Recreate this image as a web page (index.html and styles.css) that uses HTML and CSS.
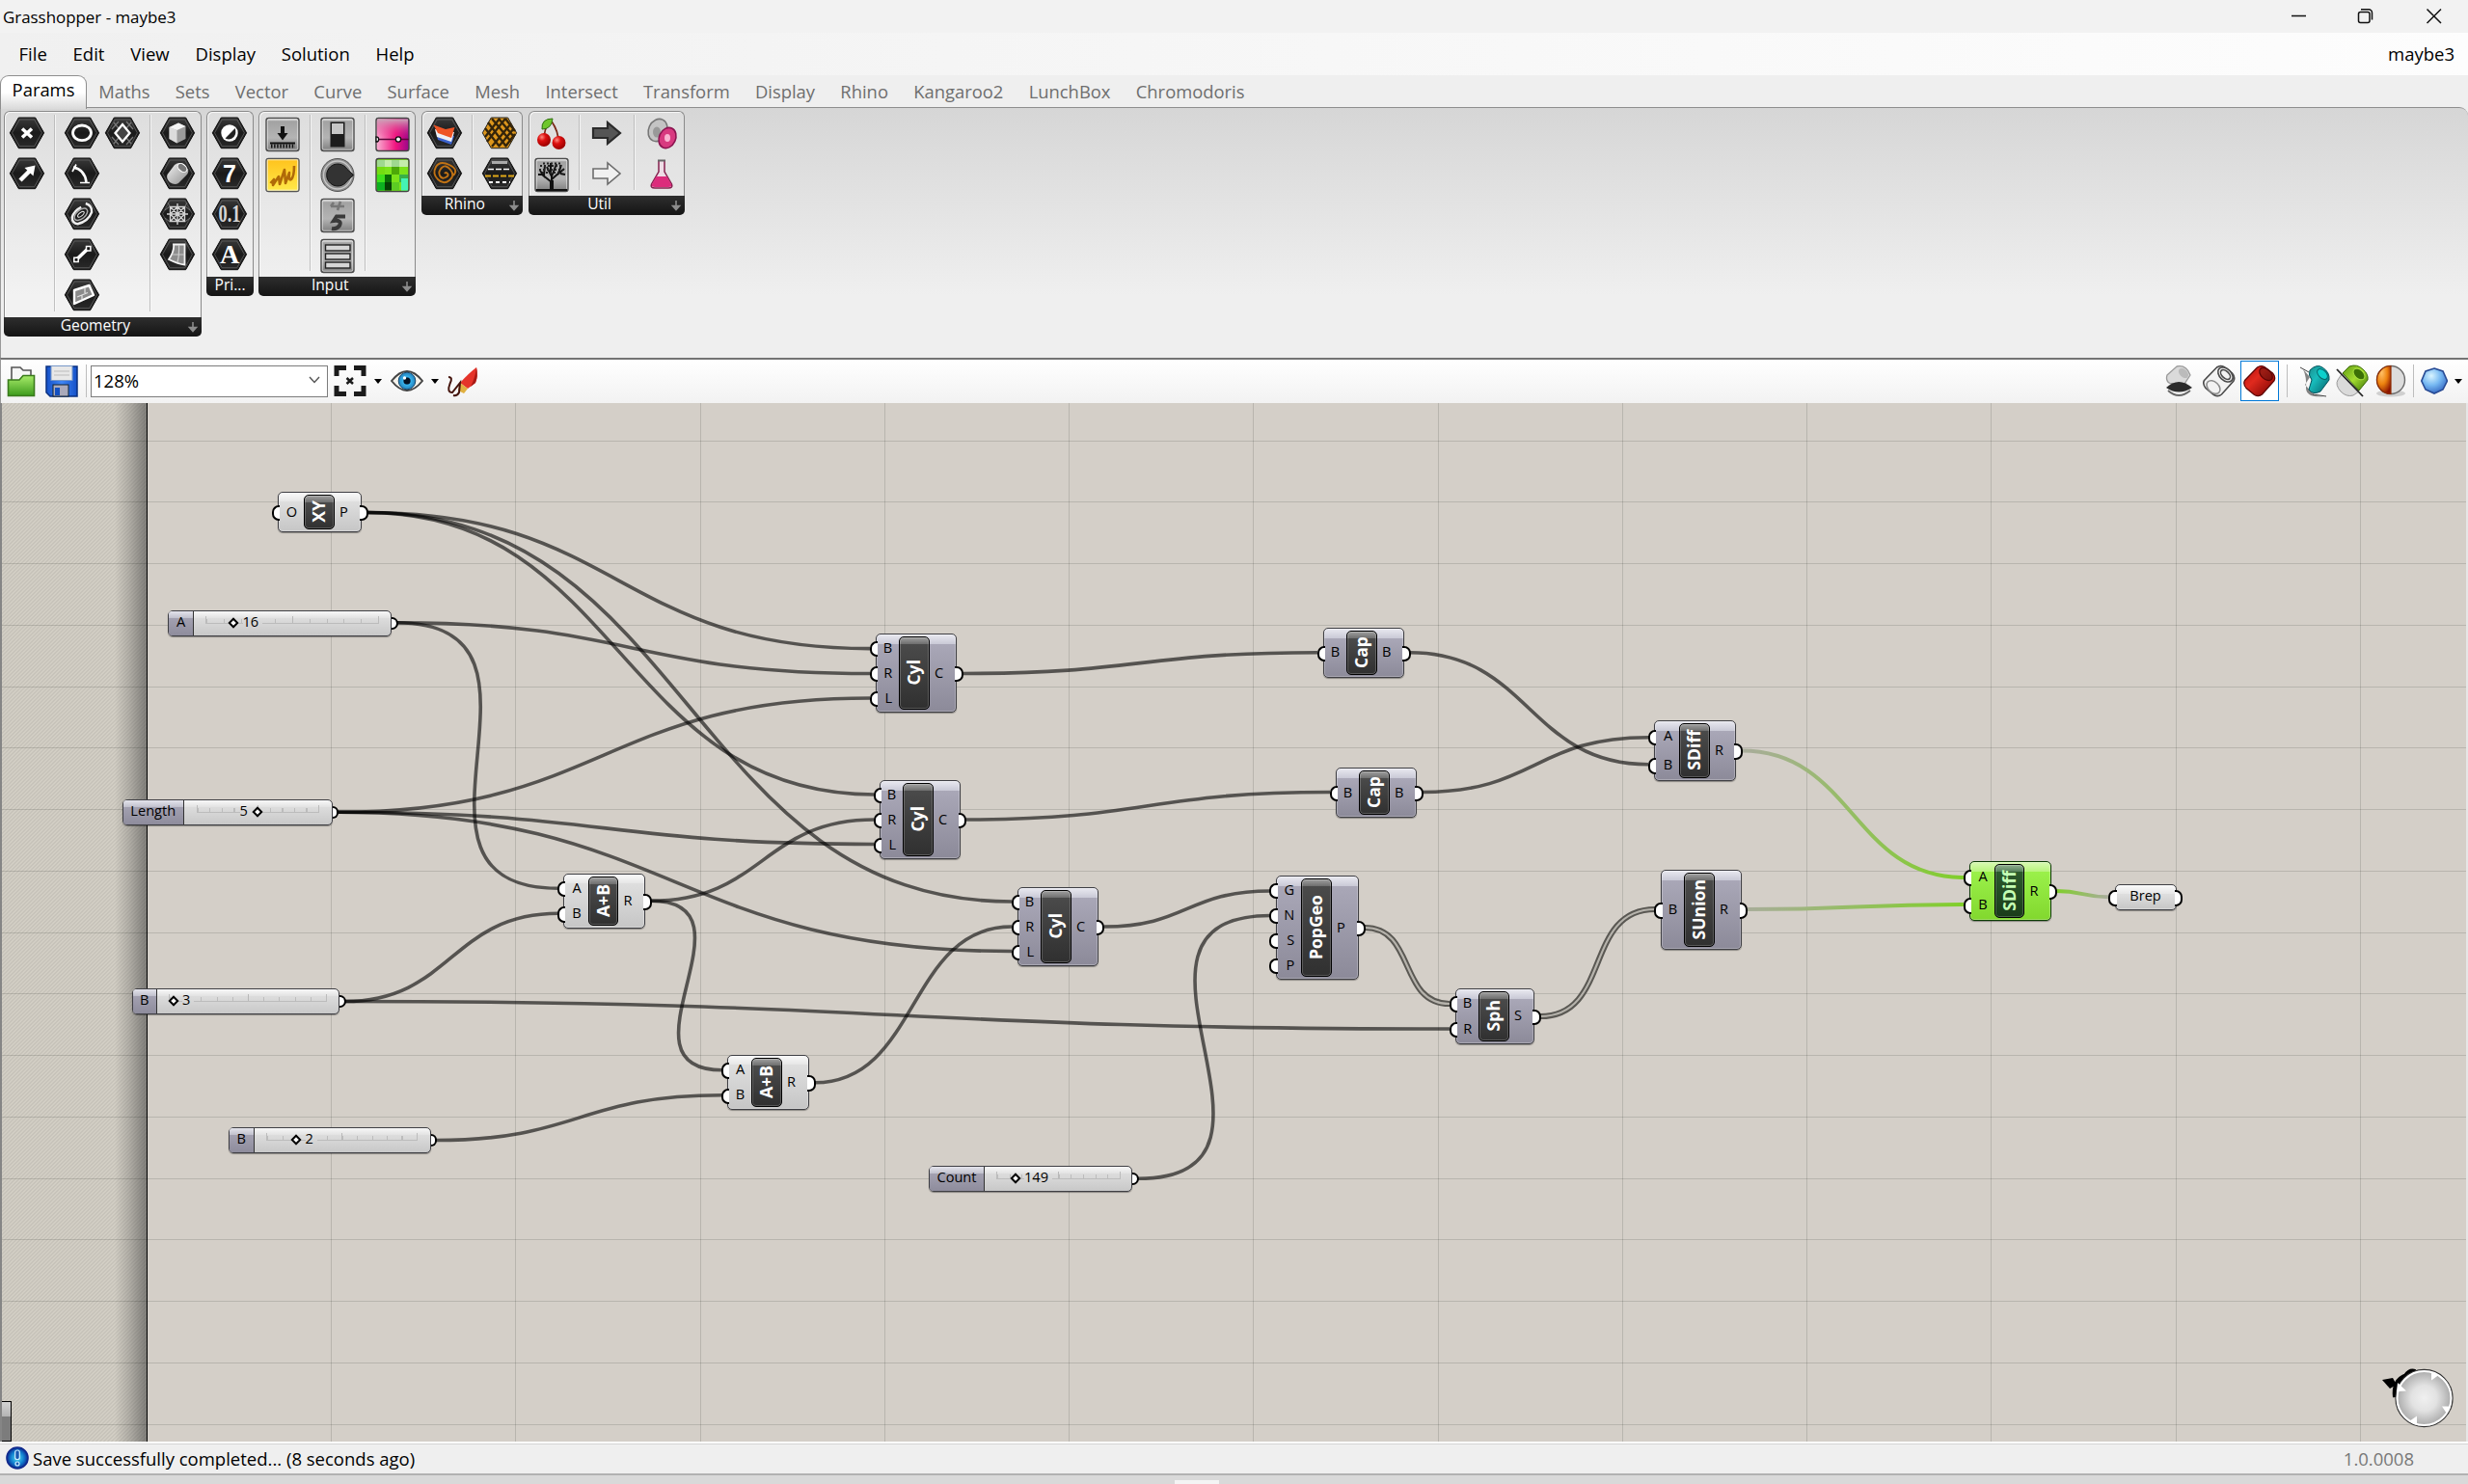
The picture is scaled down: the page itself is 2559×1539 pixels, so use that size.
FILE: index.html
```html
<!DOCTYPE html>
<html lang="en">
<head>
<meta charset="utf-8">
<title>Grasshopper - maybe3</title>
<link rel="stylesheet" href="styles.css">
</head>
<body>
<svg class="defs" width="0" height="0" aria-hidden="true">
  <defs>
    <linearGradient id="hexFill" x1="0" y1="0" x2="0" y2="1"><stop offset="0" stop-color="#3a3a3a"/><stop offset=".5" stop-color="#1a1a1a"/><stop offset="1" stop-color="#2a2a2a"/></linearGradient>
    <linearGradient id="btnFill" x1="0" y1="0" x2="0" y2="1"><stop offset="0" stop-color="#f0f0f0"/><stop offset=".1" stop-color="#a2a2a2"/><stop offset=".6" stop-color="#b4b4b4"/><stop offset="1" stop-color="#7d7d7d"/></linearGradient>
    <linearGradient id="solid" x1="0" y1="0" x2="1" y2="1"><stop offset="0" stop-color="#f4f4f4"/><stop offset="1" stop-color="#8c8c8c"/></linearGradient>
    <linearGradient id="pink" x1="0" y1="0" x2="1" y2="0"><stop offset="0" stop-color="#f9b5d5"/><stop offset=".6" stop-color="#f0147f"/><stop offset="1" stop-color="#98078b"/></linearGradient>
    <linearGradient id="pinkTop" x1="0" y1="0" x2="0" y2="1"><stop offset="0" stop-color="#c9a5b8"/><stop offset="1" stop-color="#f0147f" stop-opacity="0"/></linearGradient>
    <linearGradient id="yellow" x1="0" y1="0" x2="0" y2="1"><stop offset="0" stop-color="#ffc21c"/><stop offset="1" stop-color="#ffe94a"/></linearGradient>
    <linearGradient id="green" x1="0" y1="0" x2="0" y2="1"><stop offset="0" stop-color="#a8ec6a"/><stop offset="1" stop-color="#3c9a1c"/></linearGradient>
    <linearGradient id="blue" x1="0" y1="0" x2="1" y2="0"><stop offset="0" stop-color="#1450c8"/><stop offset=".5" stop-color="#3f86f4"/><stop offset="1" stop-color="#1450c8"/></linearGradient>
    <linearGradient id="red" x1="0" y1="0" x2="1" y2="1"><stop offset="0" stop-color="#b40c0c"/><stop offset=".4" stop-color="#e02a1e"/><stop offset="1" stop-color="#740000"/></linearGradient>
    <linearGradient id="teal" x1="0" y1="0" x2="1" y2="1"><stop offset="0" stop-color="#1d8d8d"/><stop offset=".4" stop-color="#18bcbc"/><stop offset="1" stop-color="#046068"/></linearGradient>
    <linearGradient id="lime" x1="0" y1="0" x2="1" y2="1"><stop offset="0" stop-color="#5f9a14"/><stop offset=".5" stop-color="#a4dc30"/><stop offset="1" stop-color="#3c7404"/></linearGradient>
    <radialGradient id="orange" cx=".35" cy=".25" r=".8"><stop offset="0" stop-color="#ffc066"/><stop offset=".5" stop-color="#ee8410"/><stop offset="1" stop-color="#8c1400"/></radialGradient>
    <radialGradient id="sky" cx=".38" cy=".3" r=".75"><stop offset="0" stop-color="#d8f4ff"/><stop offset=".5" stop-color="#76b8f2"/><stop offset="1" stop-color="#3264c0"/></radialGradient>
    <radialGradient id="iris"><stop offset=".2" stop-color="#0a3c78"/><stop offset=".5" stop-color="#36b0e8"/><stop offset="1" stop-color="#2480bc"/></radialGradient>
    <radialGradient id="cherry" cx=".35" cy=".3" r=".7"><stop offset="0" stop-color="#ff8a80"/><stop offset=".4" stop-color="#dd1010"/><stop offset="1" stop-color="#9c0000"/></radialGradient>
    <radialGradient id="info"><stop offset="0" stop-color="#54e0f0"/><stop offset=".6" stop-color="#1280d0"/><stop offset="1" stop-color="#0a2a90"/></radialGradient>
    <radialGradient id="dial"><stop offset="0" stop-color="#f0f0f0"/><stop offset=".45" stop-color="#e2e2e2"/><stop offset="1" stop-color="#a6a6a6"/></radialGradient>
    <g id="hex">
      <path d="M12.3 5H29.6L38.6 20.8L29.6 36.7H12.3L3.3 20.8Z" fill="url(#hexFill)" stroke="#0c0c0c"/>
      <path d="M13.2 7H28.7L36.4 20.8L28.7 34.7H13.2L5.5 20.8Z" fill="none" stroke="#686868" stroke-opacity=".7"/>
    </g>
    <g id="btn"><rect x="4" y="5.5" width="34" height="34" rx="2.5" fill="url(#btnFill)" stroke="#4c4c4c" stroke-width="1.4"/><rect x="5.3" y="6.8" width="31.4" height="31.4" rx="1.5" fill="none" stroke="#fff" stroke-opacity=".55"/></g>
    <symbol id="down" viewBox="0 0 12 14"><path d="M6 2V8M2.500 7.500H9.500L6 11.500Z" fill="#8c8c8c" stroke="#8c8c8c" stroke-width="1.600"/></symbol>
    <symbol id="tube" viewBox="0 0 34 34">
      <path d="M1.500 16.500L14.500 3Q18 .5 22 2.500L30.500 9Q34 13 32 17L19.500 31Q16 34 11.500 31.500L3 24.500Q-.5 20 1.500 16.500Z"/>
      <ellipse cx="23.500" cy="10" rx="8" ry="5" transform="rotate(43 23.5 10)" fill="#000" fill-opacity=".3" stroke-width="1.200"/>
    </symbol>
  </defs>
</svg>

<div class="window">
  <header class="titlebar">
    <span class="titlebar__text">Grasshopper - maybe3</span>
    <svg class="titlebar__controls" width="190" height="34" viewBox="0 0 190 34" fill="none" stroke="#111" stroke-width="1.500">
      <path d="M7 16.500H22"/>
      <path d="M76.500 14.500a2 2 0 0 1 2-2h7.500a2 2 0 0 1 2 2v7a2 2 0 0 1-2 2h-7.500a2 2 0 0 1-2-2zM79 9.800h8a3.500 3.500 0 0 1 3.500 3.500V20.500"/>
      <path d="M147.500 9.500L162 24M162 9.500L147.500 24"/>
    </svg>
  </header>

  <nav class="menubar">
    <span>File</span><span>Edit</span><span>View</span><span>Display</span><span>Solution</span><span>Help</span>
    <span class="menubar__doc">maybe3</span>
  </nav>

  <nav class="tabs">
    <span class="tabs__item tabs__item--active">Params</span><span class="tabs__item">Maths</span><span class="tabs__item">Sets</span><span class="tabs__item">Vector</span><span class="tabs__item">Curve</span><span class="tabs__item">Surface</span><span class="tabs__item">Mesh</span><span class="tabs__item">Intersect</span><span class="tabs__item">Transform</span><span class="tabs__item">Display</span><span class="tabs__item">Rhino</span><span class="tabs__item">Kangaroo2</span><span class="tabs__item">LunchBox</span><span class="tabs__item">Chromodoris</span>
  </nav>

  <section class="ribbon">
    <div class="panel">
      <div class="panel__body">
        <div class="col">
          <svg class="ic" viewBox="0 0 42 42"><use href="#hex"/><path d="M16 16.500L26 25.500M26 16.500L16 25.500" stroke="#fff" stroke-width="3.600"/></svg>
          <svg class="ic" viewBox="0 0 42 42"><use href="#hex"/><path d="M14 28L24 18" stroke="#fff" stroke-width="4.500"/><path d="M18.500 15L29.500 12.500L27.500 23.500Z" fill="#fff"/></svg>
        </div>
        <div class="col">
          <svg class="ic" viewBox="0 0 42 42"><use href="#hex"/><ellipse cx="21" cy="20.800" rx="9.500" ry="7.800" fill="none" stroke="#fff" stroke-width="2.800"/></svg>
          <svg class="ic" viewBox="0 0 42 42"><use href="#hex"/><path d="M12 14.500Q24 17 25.500 30" fill="none" stroke="#fff" stroke-width="2.600"/><path d="M11 19L15 11.500M19 30.500H29" stroke="#fff" stroke-width="1.600"/></svg>
          <svg class="ic" viewBox="0 0 42 42"><use href="#hex"/><g fill="none" stroke="#eee" transform="rotate(-40 21 21)"><path d="M31 15Q35 21 30 26Q21 31 11 26Q7 22 11 17Q17 13 25 15" stroke-width="2.400"/><ellipse cx="20" cy="20.500" rx="8" ry="4.500" stroke="#aaa" stroke-width="1.500"/><ellipse cx="20" cy="20.500" rx="4" ry="1.800"/></g></svg>
          <svg class="ic" viewBox="0 0 42 42"><use href="#hex"/><path d="M15 26.500L27 15" stroke="#fff" stroke-width="3.600"/><path d="M12.800 24.200h4.400v4.400h-4.400zM25.500 12.500h4.400v4.400h-4.400z" fill="#111" stroke="#fff" stroke-width="1.500"/></svg>
          <svg class="ic" viewBox="0 0 42 42"><use href="#hex"/><path d="M13 16L28.500 11L33 21L13 30Z" fill="#8a8a8a" stroke="#fff" stroke-width="2.400" stroke-linejoin="round"/><path d="M16 23L27 18.500M21 21V25.500M24 13.500V19" stroke="#ddd" stroke-width="1.300"/></svg>
        </div>
        <div class="col col--near">
          <svg class="ic" viewBox="0 0 42 42"><use href="#hex"/><path d="M12 10L30 32M30 10L12 32M10 17L17 9M25 9L32 17M10 25L17 33M25 33L32 25" stroke="#777" stroke-width="1.200"/><path d="M21 12L28.500 21L21 30L13.500 21Z" fill="#444" stroke="#fff" stroke-width="2.300"/></svg>
        </div>
        <div class="col">
          <svg class="ic" viewBox="0 0 42 42"><use href="#hex"/><path d="M12.500 15L22 10.500L29.500 14V27L20.500 31.500L12.500 27Z" fill="#9c9c9c"/><path d="M12.500 15L20.500 18V31.500L12.500 27Z" fill="#dcdcdc"/><path d="M12.500 15L22 10.500L29.500 14L20.500 18Z" fill="#f4f4f4"/></svg>
          <svg class="ic" viewBox="0 0 42 42"><use href="#hex"/><path d="M10.500 22L18 12Q22 8.500 27 11L32 16.500Q33 20 30 23L22 31Q18 33.500 13 30Q9 26 10.500 22Z" fill="url(#solid)"/><ellipse cx="26" cy="15" rx="5.500" ry="3.600" transform="rotate(40 26 15)" fill="#777" stroke="#fff"/></svg>
          <svg class="ic" viewBox="0 0 42 42"><use href="#hex"/><path d="M13.500 13.500H28.500V28.500H13.500ZM21 10V32M10 21H32M13.500 13.500L28.500 28.500M28.500 13.500L13.500 28.500M21 13.500L28.500 21L21 28.500L13.500 21Z" fill="none" stroke="#d2d2d2" stroke-width="1.400"/><path d="M8 17L13 13L11 9M34 17L29 13L31 9M8 25L13 29M34 25L29 29" stroke="#777" fill="none"/></svg>
          <svg class="ic" viewBox="0 0 42 42"><use href="#hex"/><path d="M17 10.500H28.500V31.500Q22 31 12 26Q18 17 17 10.500Z" fill="#8d8d8d" stroke="#f2f2f2" stroke-width="1.800"/><path d="M16 21H28M22.500 11Q23 22 21 29" stroke="#ccc" fill="none" stroke-width="1.200"/></svg>
        </div>
      </div>
      <div class="panel__bar"><span>Geometry</span><svg width="12" height="14"><use href="#down"/></svg></div>
    </div>

    <div class="panel">
      <div class="panel__body">
        <div class="col">
          <svg class="ic" viewBox="0 0 42 42"><use href="#hex"/><circle cx="21" cy="21" r="8.700" fill="#fff"/><path d="M26.800 16L16.500 26.500Q22 29 25.500 25Q28.500 21 26.800 16Z" fill="#222"/></svg>
          <svg class="ic" viewBox="0 0 42 42"><use href="#hex"/><text class="glyph" x="21" y="30">7</text></svg>
          <svg class="ic" viewBox="0 0 42 42"><use href="#hex"/><text class="glyph glyph--serif" x="21" y="29" textLength="23" lengthAdjust="spacingAndGlyphs">0.1</text></svg>
          <svg class="ic" viewBox="0 0 42 42"><use href="#hex"/><text class="glyph glyph--bold" x="21" y="29.500">A</text></svg>
        </div>
      </div>
      <div class="panel__bar panel__bar--short"><span>Pri...</span></div>
    </div>

    <div class="panel">
      <div class="panel__body">
        <div class="col">
          <svg class="ic" viewBox="0 0 42 42"><use href="#btn"/><path d="M19 14H23V21H26.500L21 28.500L15.500 21H19Z" fill="#111"/><path d="M8 31.500H34" stroke="#111" stroke-width="2"/><path d="M9 34.500H34" stroke="#111" stroke-width="4" stroke-dasharray="1.500 1.600"/></svg>
          <svg class="ic" viewBox="0 0 42 42"><rect x="4" y="5.500" width="34" height="34" rx="2.500" fill="url(#yellow)" stroke="#555" stroke-width="1.400"/><rect x="5.300" y="6.800" width="31.400" height="31.400" fill="none" stroke="#fff" stroke-opacity=".7"/><path d="M8.500 31L12 27L11 33L17 24L18 32L23 17L24 31L28 20Q27 29 30 27Q33 24 33 13" fill="none" stroke="#b06a08" stroke-width="2.600" stroke-linejoin="round"/></svg>
        </div>
        <div class="col">
          <svg class="ic" viewBox="0 0 42 42"><use href="#btn"/><rect x="13.500" y="9.500" width="15" height="26" fill="#1c1c1c"/><rect x="15" y="11" width="12" height="11" fill="#c6c6c6"/></svg>
          <svg class="ic" viewBox="0 0 42 42"><circle cx="21" cy="22.500" r="17" fill="#8f8f8f" stroke="#555"/><circle cx="21" cy="22.500" r="14.500" fill="none" stroke="#c8c8c8" stroke-width="1.300"/><path d="M31 16.500A11.500 11.500 0 1 0 31 28.500L37.500 22.500Z" fill="#333" stroke="#111"/></svg>
          <svg class="ic" viewBox="0 0 42 42"><use href="#btn"/><path d="M14 13H28M24 8L21 17M17 9L14 13" stroke="#777" stroke-width="2.600" fill="none"/><path d="M29 23.500H20L17 28Q26 27 23 33Q20 37 15 36" fill="none" stroke="#3a3a3a" stroke-width="4"/></svg>
          <svg class="ic" viewBox="0 0 42 42"><use href="#btn"/><g fill="#d6d6d6" stroke="#222" stroke-width="1.400"><rect x="8.500" y="11" width="25.500" height="6"/><rect x="8.500" y="20" width="25.500" height="6"/><rect x="8.500" y="29" width="25.500" height="6"/></g></svg>
        </div>
        <div class="col">
          <svg class="ic" viewBox="0 0 42 42"><rect x="4" y="5.500" width="34" height="34" rx="2.500" fill="url(#pink)" stroke="#444" stroke-width="1.400"/><rect x="5" y="6.500" width="32" height="20" fill="url(#pinkTop)"/><path d="M4 27.500H38" stroke="#5c0638" stroke-width="1.600"/><circle cx="27" cy="27.500" r="2.600" fill="#fff" stroke="#111" stroke-width="1.300"/><path d="M4 24.800a2.700 2.700 0 0 1 0 5.400z" fill="#fff" stroke="#111" stroke-width="1.300"/></svg>
          <svg class="ic" viewBox="0 0 42 42"><rect x="4" y="5.500" width="34" height="34" rx="2.500" fill="#7be21a" stroke="#444" stroke-width="1.400"/><path d="M5 7H13V14H5ZM20 7H28V14H20Z" fill="#9fd890"/><path d="M13 7H20V14H13ZM28 7H37V14H28Z" fill="#c4ecac"/><path d="M5 14H13V22H5Z" fill="#74dc12"/><path d="M20 14H28V22H20Z" fill="#4ca808"/><path d="M13 22H20V30H13Z" fill="#0a6c06"/><path d="M28 22H37V30H28Z" fill="#38b048"/><path d="M5 22H13V30H5Z" fill="#3ee01c"/><path d="M5 30H13V38.500H5Z" fill="#0cb020"/><path d="M13 30H20V38.500H13Z" fill="#064004"/><path d="M20 30H28V38.500H20Z" fill="#5ccc24"/><path d="M30 26H37V38.500H30Z" fill="#44f4b4"/></svg>
        </div>
      </div>
      <div class="panel__bar"><span>Input</span><svg width="12" height="14"><use href="#down"/></svg></div>
    </div>

    <div class="panel">
      <div class="panel__body">
        <div class="col">
          <svg class="ic" viewBox="0 0 42 42"><use href="#hex"/><path d="M12 19L14 28L28 33L31 24L22 22Z" fill="#3b62cc"/><path d="M11 17L13 25L28 30L31 20L22 19Z" fill="#eef0f4"/><path d="M9.500 12.500L22 17L31.500 15L28 26L14 21Z" fill="#ee5526"/></svg>
          <svg class="ic" viewBox="0 0 42 42"><use href="#hex"/><path d="M21 21q1-2 3 0t-2 4-6-2 2-8 9 2-1 11-12-1-2-13 14-2 4 11" fill="none" stroke="#c07214" stroke-width="1.900"/></svg>
        </div>
        <div class="col">
          <svg class="ic" viewBox="0 0 42 42"><path d="M12.300 5H29.600L38.600 20.800L29.600 36.700H12.300L3.300 20.800Z" fill="#dc961c" stroke="#222"/><path d="M6 16L21 35M9 10L28 35M13 6L33 30M20 6L36 25M27 6L37 19M6 25L21 6M8 30L27 6M13 35L33 11M20 35L36 16M27 35L37 22" stroke="#33240a" stroke-width="2.300"/></svg>
          <svg class="ic" viewBox="0 0 42 42"><use href="#hex"/><path d="M13 9.500H29" stroke="#aaa" stroke-width="3"/><path d="M9 16.500H33" stroke="#fff" stroke-width="1.600" stroke-dasharray="6 2"/><path d="M6 23.500H36" stroke="#e0a818" stroke-width="2.200" stroke-dasharray="6 2"/><path d="M10 30H32" stroke="#fff" stroke-width="1.800" stroke-dasharray="4 3"/></svg>
        </div>
      </div>
      <div class="panel__bar"><span>Rhino</span><svg width="12" height="14"><use href="#down"/></svg></div>
    </div>

    <div class="panel">
      <div class="panel__body">
        <div class="col">
          <svg class="ic" viewBox="0 0 42 42"><path d="M20 9Q12 18 14 25M21 9Q28 19 28 30" fill="none" stroke="#7a2a18" stroke-width="1.800"/><path d="M22 6Q10 6 11 17Q21 17 22 6Z" fill="#6fc62c" stroke="#2f7010"/><circle cx="13" cy="28" r="7" fill="url(#cherry)"/><circle cx="28.500" cy="31" r="7" fill="url(#cherry)"/></svg>
          <svg class="ic" viewBox="0 0 42 42"><use href="#btn"/><path d="M5 37H37V39H5Z" fill="#111"/><path d="M21 38V22M21 30L11 22M21 27L30 19M21 24L16 14M21 24L26 11M14 25L9 18M13 23L14 12M27 22L34 16M28 21L31 12M20 20V10M11 22L7 22M30 21L35 22" stroke="#111" stroke-width="2" fill="none"/><path d="M21 28V39" stroke="#111" stroke-width="4"/><path d="M9 13H33M8 17H34M11 20H31M12 10.500H30" stroke="#222" stroke-width="2" stroke-dasharray="2 2"/></svg>
        </div>
        <div class="col">
          <svg class="ic" viewBox="0 0 42 42"><path d="M7 16H22V10L35 21L22 32V26H7Z" fill="#555" stroke="#2a2a2a" stroke-width="2.200"/></svg>
          <svg class="ic" viewBox="0 0 42 42"><path d="M7 16H22V10L35 21L22 32V26H7Z" fill="#f1f1f1" stroke="#6d6d6d" stroke-width="1.600"/></svg>
        </div>
        <div class="col">
          <svg class="ic" viewBox="0 0 42 42"><ellipse cx="17" cy="18" rx="9.500" ry="12" transform="rotate(25 17 18)" fill="#c4c4c4" stroke="#777" stroke-width="1.600"/><ellipse cx="16" cy="20" rx="4" ry="5.500" fill="#999"/><ellipse cx="27" cy="26" rx="8.500" ry="11" transform="rotate(25 27 26)" fill="#d83a80" stroke="#8c1450" stroke-width="1.600"/><ellipse cx="27" cy="26" rx="3" ry="4" fill="#fab4d2"/></svg>
          <svg class="ic" viewBox="0 0 42 42"><path d="M18 8V19L10.500 32Q9 36 14 36H28Q33 36 31.500 32L24 19V8" fill="#eedde6" stroke="#84204e" stroke-width="1.500"/><path d="M15.500 24H26.500L31 32Q32 35 28 35H14Q10 35 11 32Z" fill="#dc2c7c"/><path d="M17 7.500H25" stroke="#666" stroke-width="2"/></svg>
        </div>
      </div>
      <div class="panel__bar"><span>Util</span><svg width="12" height="14"><use href="#down"/></svg></div>
    </div>
  </section>

  <section class="toolbar">
    <svg class="tb tb--open" width="34" height="36" viewBox="0 0 34 36"><path d="M5 22V4H14L17 7H25V15" fill="#f6f6f6" stroke="#555" stroke-width="1.600"/><path d="M1.500 17H13L17 12.500H28.500V33.500H1.500Z" fill="url(#green)" stroke="#3a7a1c" stroke-width="1.600"/></svg>
    <svg class="tb tb--save" width="34" height="36" viewBox="0 0 34 36"><path d="M1 3H33V34H5L1 30Z" fill="url(#blue)" stroke="#0a3080" stroke-width="1.500"/><rect x="6" y="2.500" width="22" height="15" fill="#e8e8e8" stroke="#7898c8"/><path d="M9 8H25M9 12H25" stroke="#bbb"/><rect x="8" y="22" width="16" height="12" fill="#aab" stroke="#123"/><rect x="10" y="25" width="5" height="8" fill="#1450c0"/></svg>
    <i class="sep"></i>
    <div class="combo"><span>128%</span><svg width="12" height="8" viewBox="0 0 12 8"><path d="M1 1L6 6.500L11 1" fill="none" stroke="#555" stroke-width="1.400"/></svg></div>
    <svg class="tb tb--fit" width="34" height="36" viewBox="0 0 34 36"><path d="M3 13V4.500H13M21 4.500H31V13M31 23V31.500H21M13 31.500H3V23" fill="none" stroke="#1b1b1b" stroke-width="5"/><path d="M13.500 15L20 21M20 15L13.500 21" stroke="#1b1b1b" stroke-width="2.500"/></svg>
    <i class="caret caret--fit"></i>
    <svg class="tb tb--eye" width="34" height="36" viewBox="0 0 34 36"><path d="M1 18Q9 8 17 8T33 18Q25 28 17 28T1 18Z" fill="#f6f3ec" stroke="#444" stroke-width="2"/><circle cx="17" cy="18" r="8.800" fill="url(#iris)" stroke="#17486c"/><circle cx="17" cy="18" r="3.500" fill="#051020"/><circle cx="14.500" cy="15" r="1.700" fill="#fff"/></svg>
    <i class="caret caret--eye"></i>
    <svg class="tb tb--brush" width="34" height="36" viewBox="0 0 34 36"><path d="M14 20Q23 10 31 4Q33 13 30 20L22 26Z" fill="#e5342a"/><path d="M31 4Q33 13 30 20L25 24Q30 14 31 4Z" fill="#a81a14"/><path d="M14 20L22 26L18 31L12 28Z" fill="#e0b040"/><path d="M2 14Q7 14 3.500 21Q0 30 6 30L14 20L13 30Q11 34 7 33" fill="none" stroke="#44140c" stroke-width="2"/></svg>

    <div class="toolbar__right">
      <svg class="tb tb--ghost" width="30" height="36" viewBox="0 0 30 36"><path d="M2 12L12 3Q22 1 26 12L20 21H6Q0 19 2 12Z" fill="#dadada" stroke="#9a9a9a" stroke-width="1.300"/><ellipse cx="19" cy="10" rx="6" ry="4" transform="rotate(45 19 10)" fill="#bbb"/><path d="M1 25Q14 13 28 25Q14 34 1 25Z" fill="#2c2c2c"/><path d="M3 28Q14 38 26 28" fill="none" stroke="#666" stroke-width="1.800"/></svg>
      <svg class="tb tb--wire" width="34" height="34" viewBox="0 0 34 34" fill="#f2f2f2" stroke="#4a4a4a" stroke-width="1.600"><path d="M1.500 16.500L14.500 3Q18 .5 22 2.500L30.500 9Q34 13 32 17L19.500 31Q16 34 11.500 31.500L3 24.500Q-.5 20 1.500 16.500Z"/><ellipse cx="23.500" cy="10.500" rx="9" ry="6" transform="rotate(43 23.5 10.5)"/><ellipse cx="23.500" cy="10.500" rx="6" ry="3.500" transform="rotate(43 23.5 10.5)"/><ellipse cx="11" cy="23.500" rx="8" ry="5.500" transform="rotate(43 11 23.5)" stroke="#8c8c8c"/></svg>
      <span class="picked"><svg width="34" height="34" viewBox="0 0 34 34" fill="url(#red)" stroke="#5c0404" stroke-width="1.200"><use href="#tube"/></svg></span>
      <i class="sep sep--a"></i>
      <svg class="tb tb--teal" width="32" height="36" viewBox="0 0 32 36"><path d="M4 6L11 14L6 22L16 33L26 34Q8 36 7 26Q8 14 4 6Z" fill="#444" fill-opacity=".65"/><path d="M11 7Q18 0 24 4Q32 9 31 17L22 29Q14 33 10 27L13 17Q9 12 11 7Z" fill="url(#teal)" stroke="#06525c"/><ellipse cx="24" cy="11" rx="6.500" ry="4" transform="rotate(45 24 11)" fill="#0cd0cc" stroke="#086468"/><path d="M1 4L10 9M14 32L28 34" stroke="#444"/></svg>
      <svg class="tb tb--half" width="34" height="36" viewBox="0 0 34 36"><path d="M6 11L24 29L18 33Q11 35 5 29Q-1 22 2 17Z" fill="#dadada" stroke="#999"/><path d="M7 10L14 3Q22 0 28 6Q34 11 33 17L24 28Z" fill="url(#lime)" stroke="#3c6a08"/><ellipse cx="24" cy="11" rx="7" ry="4.500" transform="rotate(43 24 11)" fill="#3c7006" stroke="#a8e040"/><path d="M1 6L28 34" stroke="#222" stroke-width="1.800"/></svg>
      <svg class="tb tb--ball" width="32" height="36" viewBox="0 0 32 36"><ellipse cx="16" cy="31" rx="15" ry="3.500" fill="#000" fill-opacity=".15"/><circle cx="16" cy="17" r="14.500" fill="#dcdcdc" stroke="#6c6c6c" stroke-width="1.400"/><path d="M16 2.500A14.500 14.500 0 0 0 16 31.500Z" fill="url(#orange)" stroke="#8c2c04" stroke-width="1.200"/></svg>
      <i class="sep sep--b"></i>
      <svg class="tb tb--gem" width="28" height="36" viewBox="0 0 28 36"><path d="M14 5L23 8L27.500 18L23 27L14 31L5 27L.8 18L5 8Z" fill="url(#sky)" stroke="#274a94" stroke-width="1.600"/></svg>
      <i class="caret"></i>
    </div>
  </section>

  <main class="canvas">
    <div class="plane">
      <div class="margin"></div>
      <svg class="wires" width="2559" height="1539" viewBox="0 0 2559 1539">
        <defs>
          <linearGradient id="g1" gradientUnits="userSpaceOnUse" x1="1806" y1="0" x2="2036" y2="0"><stop offset="0" stop-color="#a9ac9c"/><stop offset="1" stop-color="#80cf2a"/></linearGradient>
          <linearGradient id="g2" gradientUnits="userSpaceOnUse" x1="2186" y1="0" x2="2132" y2="0"><stop offset="0" stop-color="#a9ac9c"/><stop offset="1" stop-color="#80cf2a"/></linearGradient>
        </defs>
        <path class="grid" d="M2 457.500H2557M2 520.500H2557M2 584.500H2557M2 648.500H2557M2 712.500H2557M2 775.500H2557M2 839.500H2557M2 903.500H2557M2 967.500H2557M2 1030.500H2557M2 1094.500H2557M2 1158.500H2557M2 1222.500H2557M2 1285.500H2557M2 1349.500H2557M2 1413.500H2557M2 1477.500H2557M343.500 418V1495M534.500 418V1495M726.500 418V1495M917.500 418V1495M1108.500 418V1495M1299.500 418V1495M1491.500 418V1495M1682.500 418V1495M1873.500 418V1495M2064.500 418V1495M2256.500 418V1495M2447.500 418V1495"/>
        <path d="M152.500 418V1495" stroke="#000"/>
        <g class="wire">
          <path d="M381 531.500C641.500 531.500 641.500 672.600 902 672.600"/>
          <path d="M381 531.500C643.500 531.500 643.500 824 906.500 824"/>
          <path d="M381 531.500C715 531.500 715 935 1049 935"/>
          <path d="M411 645.800C656.500 645.800 656.500 698.500 902 698.500"/>
          <path d="M411 645.800C605 645.800 385 921.300 579 921.300"/>
          <path d="M350 842.300C626 842.300 626 724 902 724"/>
          <path d="M350 842.300C628 842.300 628 875.500 906.500 875.500"/>
          <path d="M350 842.300C699.500 842.300 699.500 986.500 1049 986.500"/>
          <path d="M357.500 1038.500C468 1038.500 468 947.300 579 947.300"/>
          <path d="M357.500 1038.500C930 1038.500 930 1067 1503 1067"/>
          <path d="M675 934.300C791 934.300 791 850 906.500 850"/>
          <path d="M675 934.300C792 934.300 632 1109.800 749 1109.800"/>
          <path d="M452 1182.500C600.500 1182.500 600.500 1135.800 749 1135.800"/>
          <path d="M845 1122.800C953 1122.800 941 961 1049 961"/>
          <path d="M1180 1222.300C1371 1222.300 1126 949.500 1317 949.500"/>
          <path d="M1144.600 961C1231 961 1231 924 1317 924"/>
          <path d="M998 698.500C1182 698.500 1182 676.700 1366 676.700"/>
          <path d="M1001 850C1190 850 1190 821.500 1379 821.500"/>
          <path d="M1462 676.700C1585.500 676.700 1585.500 792.700 1709 792.700"/>
          <path d="M1475 821.500C1592 821.500 1592 764.700 1709 764.700"/>
        </g>
        <g class="wire wire--list">
          <path d="M1415 962C1468 962 1450 1041 1503 1041"/>
          <path d="M1597 1054C1671 1054 1642 943 1716 943"/>
        </g>
        <g class="wire wire--gap">
          <path d="M1415 962C1468 962 1450 1041 1503 1041"/>
          <path d="M1597 1054C1671 1054 1642 943 1716 943"/>
        </g>
        <g class="wire wire--selected">
          <path d="M1806 778.500C1921 778.500 1921 910 2036 910" stroke="url(#g1)"/>
          <path d="M1812 943C1924 943 1924 938 2036 938" stroke="url(#g1)"/>
          <path d="M2132 924C2159.500 924 2159.500 930.300 2186.500 930.300" stroke="url(#g2)"/>
        </g>
      </svg>

      <div class="node node--gray" style="left:288px;top:510px;width:87px;height:42px"><div class="in" style="width:27px"><b>O</b></div><div class="core"><span>XY</span></div><div class="out"><b>P</b></div></div>
      <div class="node node--gray" style="left:584px;top:906px;width:85px;height:56.500px"><div class="in" style="width:25.500px"><b>A</b><b>B</b></div><div class="core"><span>A+B</span></div><div class="out"><b>R</b></div></div>
      <div class="node node--gray" style="left:754px;top:1094px;width:85px;height:57px"><div class="in" style="width:25px"><b>A</b><b>B</b></div><div class="core"><span>A+B</span></div><div class="out"><b>R</b></div></div>
      <div class="node" style="left:908px;top:657px;width:84px;height:82px"><div class="in" style="width:24px"><b>B</b><b>R</b><b>L</b></div><div class="core"><span>Cyl</span></div><div class="out"><b>C</b></div></div>
      <div class="node" style="left:912px;top:809px;width:83.500px;height:82px"><div class="in" style="width:24px"><b>B</b><b>R</b><b>L</b></div><div class="core"><span>Cyl</span></div><div class="out"><b>C</b></div></div>
      <div class="node" style="left:1055px;top:920px;width:83.500px;height:82px"><div class="in" style="width:24px"><b>B</b><b>R</b><b>L</b></div><div class="core"><span>Cyl</span></div><div class="out"><b>C</b></div></div>
      <div class="node" style="left:1372px;top:651px;width:84px;height:51.500px"><div class="in" style="width:24px"><b>B</b></div><div class="core"><span>Cap</span></div><div class="out"><b>B</b></div></div>
      <div class="node" style="left:1385px;top:796px;width:84px;height:52px"><div class="in" style="width:24px"><b>B</b></div><div class="core"><span>Cap</span></div><div class="out"><b>B</b></div></div>
      <div class="node" style="left:1715px;top:747px;width:85px;height:63px"><div class="in" style="width:26px"><b>A</b><b>B</b></div><div class="core"><span>SDiff</span></div><div class="out"><b>R</b></div></div>
      <div class="node" style="left:1322.500px;top:908px;width:86.500px;height:108px"><div class="in" style="width:26.500px"><b>G</b><b>N</b><b>S</b><b>P</b></div><div class="core"><span>PopGeo</span></div><div class="out"><b>P</b></div></div>
      <div class="node" style="left:1509px;top:1025px;width:82px;height:57.500px"><div class="in" style="width:24px"><b>B</b><b>R</b></div><div class="core"><span>Sph</span></div><div class="out"><b>S</b></div></div>
      <div class="node" style="left:1721.500px;top:902px;width:84px;height:82.500px"><div class="in" style="width:24.500px"><b>B</b></div><div class="core"><span>SUnion</span></div><div class="out"><b>R</b></div></div>
      <div class="node node--selected" style="left:2042px;top:893px;width:84.500px;height:62px"><div class="in" style="width:25.500px"><b>A</b><b>B</b></div><div class="core"><span>SDiff</span></div><div class="out"><b>R</b></div></div>
      <div class="node node--gray node--param" style="left:2192.500px;top:917px;width:64px;height:27px"><div class="in"><b></b></div><span>Brep</span><div class="out"><b></b></div></div>

      <div class="slider" style="left:174px;top:633px;width:232px"><div class="slider__name" style="width:26px">A</div><i class="rail" style="left:38px;width:180px"></i><i class="gem" style="left:67px"></i><span class="slider__value" style="left:76.500px">16</span><i class="plug"></i></div>
      <div class="slider" style="left:126.500px;top:829px;width:218px"><div class="slider__name" style="width:63.500px">Length</div><i class="rail" style="left:76px;width:127px"></i><i class="gem" style="left:139.500px"></i><span class="slider__value" style="left:121px">5</span><i class="plug"></i></div>
      <div class="slider" style="left:137px;top:1025px;width:215px"><div class="slider__name" style="width:24.500px">B</div><i class="rail" style="left:37px;width:164px"></i><i class="gem" style="left:42px"></i><span class="slider__value" style="left:51px">3</span><i class="plug"></i></div>
      <div class="slider" style="left:237px;top:1169px;width:209.500px"><div class="slider__name" style="width:25.500px">B</div><i class="rail" style="left:38px;width:157px"></i><i class="gem" style="left:69px"></i><span class="slider__value" style="left:78.500px">2</span><i class="plug"></i></div>
      <div class="slider" style="left:963px;top:1209px;width:211px"><div class="slider__name" style="width:57px">Count</div><i class="rail" style="left:69px;width:129px"></i><i class="gem" style="left:88.500px"></i><span class="slider__value" style="left:98px">149</span><i class="plug"></i></div>

      <div class="stub"></div>
      <svg class="compass" width="84" height="72" viewBox="0 0 84 72">
        <path d="M15 37Q13 20 26 15Q30 9 35 11" fill="none" stroke="#000" stroke-width="6"/>
        <path d="M1 19L12 17L16 24L9 28Z" fill="#000"/>
        <circle cx="44.500" cy="38" r="29.500" fill="url(#dial)" stroke="#333" stroke-width="1.300"/>
        <circle cx="44.500" cy="38" r="28" fill="none" stroke="#fff" stroke-width="2"/>
        <path d="M52 11V19.500L59 14.500ZM17 22L26 30.500L16 31ZM63 46.500H72L68 54ZM37 56.500V66L29 62Z" fill="#fff"/>
      </svg>
    </div>
  </main>

  <footer class="status">
    <svg width="24" height="24" viewBox="0 0 24 24"><circle cx="12" cy="12" r="11" fill="url(#info)" stroke="#10288c" stroke-width="1.600"/><rect x="9.700" y="4" width="4.600" height="9.500" rx="2" fill="#1858b0" stroke="#cdeeff" stroke-width="1.200"/><circle cx="12" cy="18" r="2" fill="#1858b0" stroke="#cdeeff" stroke-width="1.200"/></svg>
    <span>Save successfully completed... (8 seconds ago)</span>
    <span class="status__version">1.0.0008</span>
  </footer>
  <div class="below"><i></i></div>
</div>
</body>
</html>
```
FILE: styles.css
```css
* { box-sizing: border-box; }
html, body { margin: 0; height: 100%; overflow: hidden; }
body { font-family: "Open Sans", "Noto Sans", sans-serif; font-size: 18.5px; color: #000; background: #efefef; }
.defs { position: absolute; }
.window { display: flex; flex-direction: column; width: 2559px; height: 1539px; }

.titlebar { display: flex; align-items: center; height: 34px; padding-left: 3px; background: #f2f2f2; font-size: 16.9px; }
.titlebar__controls { margin-left: auto; }

.menubar { display: flex; align-items: center; gap: 26.8px; height: 44px; padding: 0 14px 2px 19.5px; background: linear-gradient(90deg, #f0f0f0, #fdfdfd); }
.menubar__doc { margin-left: auto; }

.tabs { display: flex; align-items: flex-end; height: 33px; background: #efefef; color: #6e6e6e; }
.tabs__item { height: 33px; line-height: 33px; padding: 0 13.15px; font-size: 18.4px; }
.tabs__item--active { position: relative; width: 90px; padding: 0; margin-right: -1px; text-align: center; line-height: 28px; color: #000; border: 1.5px solid #8e8e8e; border-bottom: 0; border-radius: 9px 9px 0 0; background: linear-gradient(#fff 50%, #dadada); height: 35px; margin-bottom: -2px; z-index: 1; }

.ribbon { display: flex; align-items: flex-start; gap: 5.5px; height: 260px; padding: 3px 3px; border-top: 1.5px solid #8e8e8e; border-left: 1px solid #999; border-radius: 0 9px 0 0; background: linear-gradient(#d6d6d6, #efefef 75%); }
.panel { overflow: hidden; border-radius: 5px; }
.panel__body { display: flex; padding: 1px 2.5px 1.5px 2.2px; border: 1.3px solid #8a8a8a; border-bottom: 0; border-radius: 6px 6px 0 0; background: rgba(255, 255, 255, .18); box-shadow: inset 1px 1px 0 rgba(255, 255, 255, .7); }
.col { width: 42px; }
.col + .col { margin-left: 15px; position: relative; }
.col + .col::before { content: ""; position: absolute; left: -8px; top: 2px; bottom: 4px; width: 2px; background: linear-gradient(90deg, #b4b4b4 50%, #fafafa 50%); opacity: .8; }
.col + .col--near { margin-left: 0; }
.col + .col--near::before { display: none; }
.ic { display: block; width: 42px; height: 42px; }
.panel__bar { display: flex; align-items: center; height: 20.5px; padding-right: 3px; color: #fff; font-size: 15.6px; line-height: 18px; background: linear-gradient(#2e2e2e, #141414); }
.panel__bar span { flex: 1; text-align: center; padding-bottom: 3px; }
.panel__bar--short { padding: 0; }
.glyph { fill: #fff; text-anchor: middle; font: 700 25px "Liberation Sans", sans-serif; }
.glyph--serif { font: 700 26px "Liberation Serif", serif; fill: #d4d4d4; }
.glyph--bold { font: 700 28px "Liberation Serif", serif; }

.toolbar { display: flex; align-items: center; height: 47px; padding: 0 0 1px 5.5px; border-top: 2.5px solid #747474; border-left: 1px solid #999; background: linear-gradient(#fff, #f2f2f2); }
.tb { flex: none; }
.tb--open { width: 34px; }
.tb--save { margin-left: 6px; }
.sep { width: 1.5px; height: 34px; margin-left: 8px; background: #bdbdbd; }
.combo { display: flex; align-items: center; justify-content: space-between; width: 246px; height: 33px; margin-left: 3.5px; padding: 0 7px 2px 2.5px; border: 1.3px solid #7c7c7c; background: #fff; }
.tb--fit { margin-left: 6px; }
.caret { border: 4.5px solid transparent; border-top: 5px solid #000; border-bottom: 0; }
.caret--fit { margin-left: 8px; }
.tb--eye { margin-left: 9px; }
.caret--eye { margin-left: 8px; }
.tb--brush { margin-left: 8px; }
.toolbar__right { display: flex; align-items: center; height: 100%; margin-left: auto; padding-right: 6.5px; }
.tb--wire { margin-left: 9px; }
.picked { display: flex; align-items: center; justify-content: center; width: 40px; height: 42px; margin-left: 5px; border: 1.5px solid #0078d7; background: #fff; }
.sep--a { margin-left: 8px; }
.tb--teal { margin-left: 12px; }
.tb--half { margin-left: 5.5px; }
.tb--ball { margin-left: 7px; }
.sep--b { margin-left: 7px; }
.tb--gem { margin-left: 7px; margin-right: 6.5px; }

.canvas { position: relative; height: 1077px; overflow: hidden; border-left: 2px solid #858585; border-right: 2px solid #e6e6e6; background: #d4cfc8; }
.plane { position: absolute; left: -2px; top: -418px; width: 2559px; height: 1539px; }
.margin { position: absolute; left: 2px; top: 418px; width: 150px; height: 1077px; background: linear-gradient(90deg, transparent 78%, rgba(60, 60, 60, .22) 88%, rgba(60, 60, 60, .55)), repeating-linear-gradient(135deg, #d2cec4 0 1.414px, #c7c3ba 1.414px 2.828px); }
.wires { position: absolute; left: 0; top: 0; }
.grid { fill: none; stroke: rgba(0, 10, 0, .13); stroke-width: 1; }
.wire { fill: none; stroke: rgba(0, 0, 0, .6); stroke-width: 3.6; }
.wire--list { stroke: #5a5853; stroke-width: 6.2; }
.wire--gap { stroke: #b6b3ac; stroke-width: 2.2; }
.wire--selected { stroke-width: 4; }

.node, .slider { position: absolute; display: flex; border: 1.4px solid #3f3f44; border-radius: 5px; font-size: 14.6px; box-shadow: 0 1px 1px rgba(0, 0, 0, .35); }
.node { padding: 1px 0; background: linear-gradient(#e9e9f0, #c9c9d6 10px, #a9a7b7 10.5px, #8c8a99); box-shadow: inset 0 0 0 1px rgba(255, 255, 255, .25), 0 1px 1px rgba(0, 0, 0, .35); }
.node--gray { background: linear-gradient(#fafafa, #e6e6e6 9px, #dedede 9.5px, #c6c6c6); }
.node--selected { border-color: #0c3c04; background: linear-gradient(#d8fab4, #b8f47c 10px, #9af04a 10.5px, #82d82e); }
.in, .out { display: flex; flex-direction: column; }
.in { flex: none; text-align: right; margin-left: -1px; }
.out { flex: 1; }
.in b, .out b { position: relative; flex: 1; display: flex; align-items: center; font-weight: 400; padding-bottom: 3px; }
.in b { justify-content: flex-end; padding-right: 6.8px; }
.out b { padding-left: 5.5px; }
.in b::before, .out b::after, .plug { content: ""; position: absolute; top: calc(50% - 7.2px); width: 6.5px; height: 12.5px; border: 2.3px solid #000; background: #fff; }
.in b::before { left: -6.5px; border-right: 0; border-radius: 7px 0 0 7px; }
.out b::after, .plug { right: -7.6px; border-left: 0; border-radius: 0 7px 7px 0; }
.core { display: flex; flex: none; align-items: center; justify-content: center; width: 31.5px; margin: 1px 0; border: 1.4px solid #000; border-radius: 5px; color: #fff; background: linear-gradient(#a0a0a0, #6e6e6e 7px, #4a4a4a 7.5px, #303030); box-shadow: inset 0 0 0 1px rgba(255, 255, 255, .2); }
.core span { writing-mode: vertical-rl; transform: rotate(180deg); margin: 0 1.5px 1px 0; font-size: 17.6px; line-height: 28px; font-weight: 700; white-space: nowrap; }
.node--selected .core { color: #c4ffb4; background: linear-gradient(#90b090, #56805a 7px, #2c5a2c 7.5px, #1a3c1a); }
.node--param { align-items: stretch; justify-content: center; padding: 0; }
.node--param > span { line-height: 21px; }
.node--param .in, .node--param .out { position: absolute; top: 0; bottom: 0; width: 10px; }
.node--param .in { left: 0; }
.node--param .out { right: 0; }

.slider { height: 26.5px; background: linear-gradient(#f8f8f8, #e2e2e2 7px, #dcdcdc 7.5px, #c8c8c8); }
.slider__name { text-align: center; line-height: 21px; border-right: 1.3px solid #333; border-radius: 3px 0 0 3px; background: linear-gradient(#e4e4ec, #c0c0cc 7px, #a2a0b0 7.5px, #8e8c9c); }
.rail { position: absolute; top: 5px; height: 7.5px; border: 1px solid #bcbcbc; border-top: 0; background: linear-gradient(#b8b8b8, #b8b8b8) 50% 0 / 1px 100% no-repeat, repeating-linear-gradient(90deg, #bcbcbc 0 1px, transparent 1px 10%) 0 100% / 100% 4px no-repeat; }
.slider__value { position: absolute; top: 0; height: 100%; padding-right: 4px; line-height: 21px; background: inherit; }
.gem { position: absolute; z-index: 1; top: 8px; width: 8px; height: 8px; margin-left: -4px; border: 2px solid #000; background: #fff; transform: rotate(45deg); }
.plug { top: 6px; }

.stub { position: absolute; left: 2px; top: 1453px; width: 10px; height: 42px; border: 1.3px solid #000; border-left: 0; background: linear-gradient(#d4d4d4, #b4b4b4 15px, #7c7c7c 15px); }
.compass { position: absolute; left: 2469px; top: 1412px; }

.status { display: flex; align-items: center; height: 33px; padding: 0 56px 1px 6px; border-top: 2px solid #fff; box-shadow: inset 0 1px 0 #d4d4d4; background: #efefef; }
.status span { padding-left: 4px; }
.status .status__version { margin-left: auto; color: #787878; }
.below { flex: 1; display: flex; justify-content: center; align-items: flex-end; border-top: 2px solid #b2b2b2; background: #d9d9d9; }
.below i { width: 46px; height: 4px; margin-right: 78px; background: #f4f4f4; }
```
